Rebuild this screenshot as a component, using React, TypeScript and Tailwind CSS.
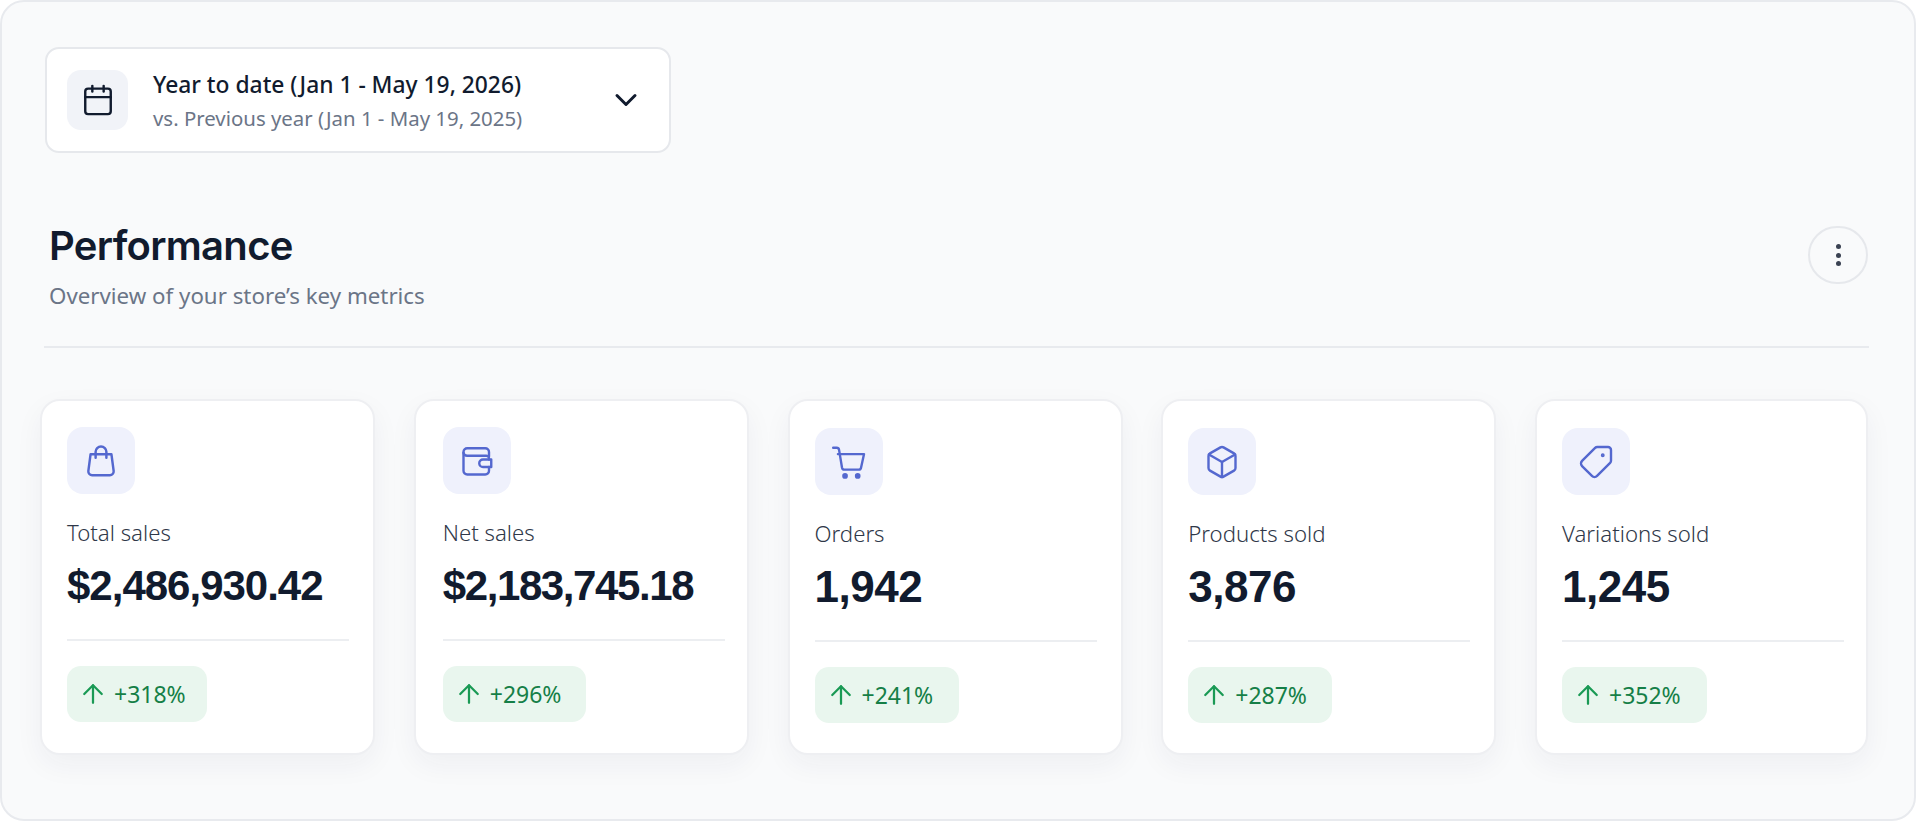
import React from "react";
import { Calendar, ChevronDown, ArrowUp, Box, Tag } from "lucide-react";

const Bag = () => (
  <svg width="38" height="38" viewBox="0 0 24 24" fill="none" stroke="currentColor" strokeWidth="1.55" strokeLinecap="round" strokeLinejoin="round">
    <path d="M5.4 7.8h13.2l1.4 10.6a2.4 2.4 0 0 1-2.4 2.6H6.4a2.4 2.4 0 0 1-2.4-2.6z" />
    <path d="M8.6 10V6.2a3.4 3.4 0 0 1 6.8 0V10" />
  </svg>
);
const Wallet = () => (
  <svg width="36" height="36" viewBox="0 0 24 24" fill="none" stroke="currentColor" strokeWidth="1.6" strokeLinecap="round" strokeLinejoin="round">
    <path d="M20 9V6a2.5 2.5 0 0 0-2.5-2.5h-12A2.5 2.5 0 0 0 3 6v12.5A2.5 2.5 0 0 0 5.5 21h12a2.5 2.5 0 0 0 2.5-2.5V16" />
    <path d="M3 6.5A2.5 2.5 0 0 0 5.5 8.5H18a2 2 0 0 1 2 1.5V11" />
    <path d="M16 11h5.5v5H16a2.5 2.5 0 0 1 0-5z" />
  </svg>
);
const Cart = () => (
  <svg width="38" height="38" viewBox="0 0 24 24" fill="none" stroke="currentColor" strokeWidth="1.5" strokeLinecap="round" strokeLinejoin="round">
    <path d="M2 3h2.2a1.5 1.5 0 0 1 1.5 1.2L7.6 15.6a1.5 1.5 0 0 0 1.5 1.2h9a1.5 1.5 0 0 0 1.5-1.2L21.5 7H5" />
    <circle cx="9.5" cy="20.8" r="1.05" fill="currentColor" />
    <circle cx="17.5" cy="20.8" r="1.05" fill="currentColor" />
  </svg>
);

const cards = [
  { label: "Total sales", value: "$2,486,930.42", delta: "+318%", icon: <Bag />, w: "w-[335px]", pad: "pl-[25px] pr-[25px] pt-[26px]", val: "text-[42px] tracking-[-1px]", pill: "w-[140px]" },
  { label: "Net sales", value: "$2,183,745.18", delta: "+296%", icon: <Wallet />, w: "w-[335px]", pad: "pl-[27px] pr-[25px] pt-[26px]", val: "text-[42px] tracking-[-1.4px]", pill: "w-[143px]" },
  { label: "Orders", value: "1,942", delta: "+241%", icon: <Cart />, w: "w-[335px]", pad: "pl-[25px] pr-[25px] pt-[27px]", val: "text-[44px] tracking-[-0.5px]", pill: "w-[144px]" },
  { label: "Products sold", value: "3,876", delta: "+287%", icon: <Box size={36} strokeWidth={1.6} />, w: "w-[335px]", pad: "pl-[25px] pr-[25px] pt-[27px]", val: "text-[44px] tracking-[-0.5px]", pill: "w-[144px]" },
  { label: "Variations sold", value: "1,245", delta: "+352%", icon: <Tag size={36} strokeWidth={1.6} className="rotate-90" />, w: "w-[333px]", pad: "pl-[25px] pr-[25px] pt-[27px]", val: "text-[44px] tracking-[-0.5px]", pill: "w-[145px]" },
];

export default function App() {
  return (
    <div className="h-[821px] w-[1916px] bg-white overflow-hidden font-['Noto_Sans',sans-serif]">
      <div className="h-full w-full rounded-[24px] border-2 border-[#e8eaee] bg-[#f9fafb] pt-[45px] pl-[43px] pr-[44px]">
        <div className="flex h-[106px] w-[626px] items-center rounded-[14px] border-2 border-[#e6e8ec] bg-white pl-[20px] pr-[25px]">
          <div className="flex h-[60px] w-[61px] items-center justify-center rounded-[14px] bg-[#f1f3f8] text-[#111b2e]">
            <Calendar size={34} strokeWidth={1.7} />
          </div>
          <div className="ml-[25px] flex-1 pt-[2px]">
            <div className="text-[22.8px] leading-[32px] font-medium text-[#111b2e]">Year to date (Jan 1 - May 19, 2026)</div>
            <div className="mt-[1px] text-[20.4px] leading-[32px] text-[#6b7587]">vs. Previous year (Jan 1 - May 19, 2025)</div>
          </div>
          <ChevronDown size={36} strokeWidth={2} className="text-[#111b2e]" />
        </div>

        <div className="mt-[69px] flex items-start justify-between pl-[4px] pr-[2px] pb-[35px] -mb-px">
          <div>
            <h1 className="font-['Inter',sans-serif] text-[40px] leading-[48px] font-semibold tracking-[-0.7px] text-[#111b2e]">Performance</h1>
            <p className="mt-[10px] text-[22.3px] leading-[32px] text-[#6b7587]">Overview of your store’s key metrics</p>
          </div>
          <div className="mt-[4px] flex h-[58px] w-[60px] items-center justify-center rounded-full border-2 border-[#e6e8ec]">
            <span className="flex flex-col gap-[3.5px]">
              <i className="block h-[5px] w-[5px] rounded-full bg-[#3a4252]" />
              <i className="block h-[5px] w-[5px] rounded-full bg-[#3a4252]" />
              <i className="block h-[5px] w-[5px] rounded-full bg-[#3a4252]" />
            </span>
          </div>
        </div>
        <div className="-ml-px h-[2px] w-[1825px] bg-[#e8eaee]" />

        <div className="mt-[51px] -ml-[5px] flex gap-[38.75px]">
          {cards.map((c) => (
            <div key={c.label} className={`h-[356px] ${c.w} shrink-0 rounded-[20px] border-2 border-[#eeeff2] bg-white shadow-[0_10px_28px_rgba(30,41,70,0.05)] ${c.pad}`}>
              <div className="flex h-[67px] w-[68px] items-center justify-center rounded-[16px] bg-[#eff1fc] text-[#5468cf]">{c.icon}</div>
              <div className="mt-[23px] text-[22.2px] font-light leading-[32px] text-[#2f3849]">{c.label}</div>
              <div className={`mt-[13px] font-['Liberation_Sans',sans-serif] ${c.val} leading-[48px] font-bold text-[#111b2e]`}>{c.value}</div>
              <div className="mt-[29px] h-[2px] w-[282px] bg-[#eceef1]" />
              <div className={`${c.pill} mt-[25px] flex h-[56px] items-center rounded-[14px] bg-[#e9f6ee] pl-[11px]`}>
                <ArrowUp size={30} strokeWidth={1.8} className="text-[#1a9a55]" />
                <span className="ml-[6px] text-[23px] text-[#157f47]">{c.delta}</span>
              </div>
            </div>
          ))}
        </div>
      </div>
    </div>
  );
}
